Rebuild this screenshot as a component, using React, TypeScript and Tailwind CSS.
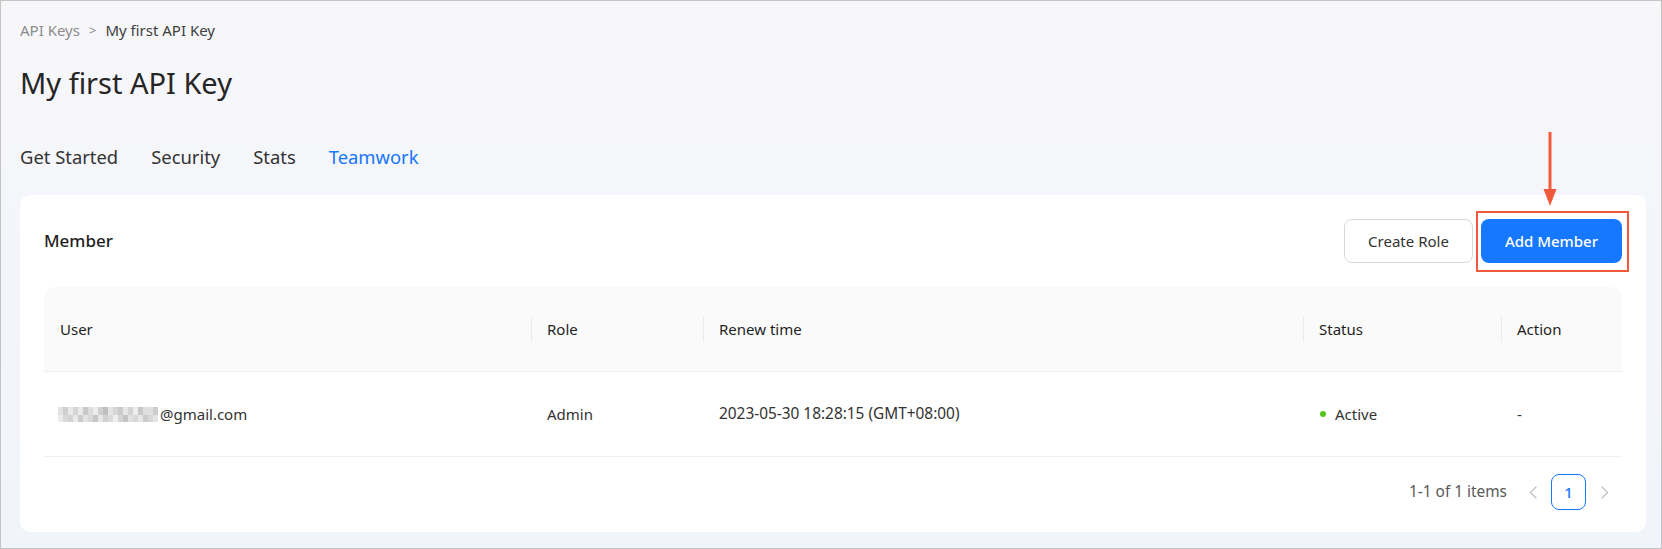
import React from "react";

const mosaic: string[] = [
  "bg-[#e2e2e2]", "bg-[#cfcfcf]", "bg-[#e8e8e8]", "bg-[#d4d4d4]", "bg-[#eaeaea]", "bg-[#c9c9c9]",
  "bg-[#dcdcdc]", "bg-[#ececec]", "bg-[#d0d0d0]", "bg-[#bfbfbf]", "bg-[#e4e4e4]", "bg-[#d6d6d6]",
  "bg-[#cacaca]", "bg-[#e6e6e6]", "bg-[#d2d2d2]", "bg-[#ededed]", "bg-[#c8c8c8]", "bg-[#dedede]",
  "bg-[#e0e0e0]", "bg-[#cdcdcd]",
];
const mosaic2: string[] = [
  "bg-[#ececec]", "bg-[#dadada]", "bg-[#d3d3d3]", "bg-[#e9e9e9]", "bg-[#cccccc]", "bg-[#e3e3e3]",
  "bg-[#d8d8d8]", "bg-[#c6c6c6]", "bg-[#e6e6e6]", "bg-[#d1d1d1]", "bg-[#dbdbdb]", "bg-[#eeeeee]",
  "bg-[#d5d5d5]", "bg-[#c4c4c4]", "bg-[#e1e1e1]", "bg-[#d9d9d9]", "bg-[#e7e7e7]", "bg-[#cbcbcb]",
  "bg-[#d7d7d7]", "bg-[#e5e5e5]",
];

const cols = [
  { name: "User", w: "w-[487px]" },
  { name: "Role", w: "w-[172px]" },
  { name: "Renew time", w: "w-[600px]" },
  { name: "Status", w: "w-[198px]" },
  { name: "Action", w: "flex-1" },
];

const Chevron = ({ dir }: { dir: "left" | "right" }) => (
  <svg width="10" height="13" viewBox="0 0 10 13" fill="none">
    <path
      d={dir === "left" ? "M8 1L2.5 6.5L8 12" : "M2 1L7.5 6.5L2 12"}
      stroke="#bfbfbf"
      strokeWidth="1.2"
      strokeLinecap="round"
      strokeLinejoin="round"
    />
  </svg>
);

export default function App() {
  return (
    <div
      className="w-[1662px] h-[549px] overflow-hidden border border-[#c4c4c4] bg-gradient-to-b from-[#f7f7fa] to-[#f1f4fb] pl-[19px] pr-[15px] pt-[18px] text-[#1f1f1f]"
      style={{ fontFamily: '"Noto Sans", "Open Sans", sans-serif' }}
    >
      {/* breadcrumb */}
      <div className="flex items-center h-[22px] text-[15px] leading-[22px]">
        <span className="text-[#8c8c8c]">API Keys</span>
        <span className="text-[#8c8c8c] mx-[9px] text-[13px]">&gt;</span>
        <span className="text-[#404040]">My first API Key</span>
      </div>

      <h1 className="mt-[24px] text-[29px] leading-[36px] text-[#262626]">My first API Key</h1>

      {/* tabs */}
      <div className="mt-[42px] flex gap-[33px] text-[18.4px] leading-[28px] text-[#333]">
        <span>Get Started</span>
        <span>Security</span>
        <span>Stats</span>
        <span className="text-[#1677ff]">Teamwork</span>
      </div>

      {/* card */}
      <div className="mt-[24px] bg-white rounded-[10px] px-6 pt-6 pb-[22px]">
        <div className="flex items-center justify-between h-[44px]">
          <span className="text-[17px] font-medium text-[#1f1f1f]">Member</span>
          <div className="flex items-center gap-[8px]">
            <button className="h-[44px] w-[129px] rounded-[8px] border border-[#d9d9d9] bg-white text-[15px] text-[#333]">
              Create Role
            </button>
            <div className="relative">
              <button className="h-[44px] w-[141px] rounded-[8px] bg-[#1677ff] text-[15px] font-medium text-white">
                Add Member
              </button>
              {/* annotation box */}
              <div className="absolute -left-[5px] -right-[7px] -top-[8px] -bottom-[9px] border-2 border-[#f05a3a] pointer-events-none" />
              {/* annotation arrow */}
              <svg
                className="absolute left-[61px] -top-[87px]"
                width="16"
                height="76"
                viewBox="0 0 16 76"
                fill="none"
              >
                <path d="M8 0V58" stroke="#f05a3a" strokeWidth="3" />
                <path d="M1.5 57L8 74L14.5 57Z" fill="#f05a3a" />
              </svg>
            </div>
          </div>
        </div>

        {/* table */}
        <div className="mt-6 text-[15px]">
          <div className="flex h-[85px] items-center bg-[#fafafa] rounded-t-[10px] border-b border-[#f0f0f0] font-[450] text-[#1f1f1f]">
            {cols.map((c, i) => (
              <div key={c.name} className={`${c.w} relative h-full flex items-center pl-4`}>
                {i > 0 && <div className="absolute left-0 top-1/2 -translate-y-1/2 h-[26px] w-px bg-[#ebebeb]" />}
                {c.name}
              </div>
            ))}
          </div>
          <div className="flex h-[85px] items-center border-b border-[#f0f0f0] text-[#333]">
            <div className="w-[487px] flex items-center pl-[14px]">
              <div className="flex flex-col">
                <div className="flex">
                  {mosaic.map((m, i) => (
                    <span key={i} className={`${m} w-[5px] h-[8px]`} />
                  ))}
                </div>
                <div className="flex">
                  {mosaic2.map((m, i) => (
                    <span key={i} className={`${m} w-[5px] h-[7px]`} />
                  ))}
                </div>
              </div>
              <span className="ml-[2px]">@gmail.com</span>
            </div>
            <div className="w-[172px] pl-4">Admin</div>
            <div className="w-[600px] pl-4 text-[15.4px]">2023-05-30 18:28:15 (GMT+08:00)</div>
            <div className="w-[198px] pl-[17px] flex items-center">
              <span className="w-[6px] h-[6px] rounded-full bg-[#52c41a] mr-[9px]" />
              Active
            </div>
            <div className="flex-1 pl-4">-</div>
          </div>

          {/* pagination */}
          <div className="mt-[17px] flex items-center justify-end h-[36px]">
            <span className="text-[#595959] text-[15.4px] mr-[8px]">1-1 of 1 items</span>
            <div className="flex items-center gap-px">
              <span className="w-[35px] h-[36px] flex items-center justify-center">
                <Chevron dir="left" />
              </span>
              <span className="w-[35px] h-[36px] flex items-center justify-center rounded-[8px] border border-[#1677ff] text-[#1677ff] font-medium">
                1
              </span>
              <span className="w-[35px] h-[36px] flex items-center justify-center">
                <Chevron dir="right" />
              </span>
            </div>
          </div>
        </div>
      </div>
    </div>
  );
}
